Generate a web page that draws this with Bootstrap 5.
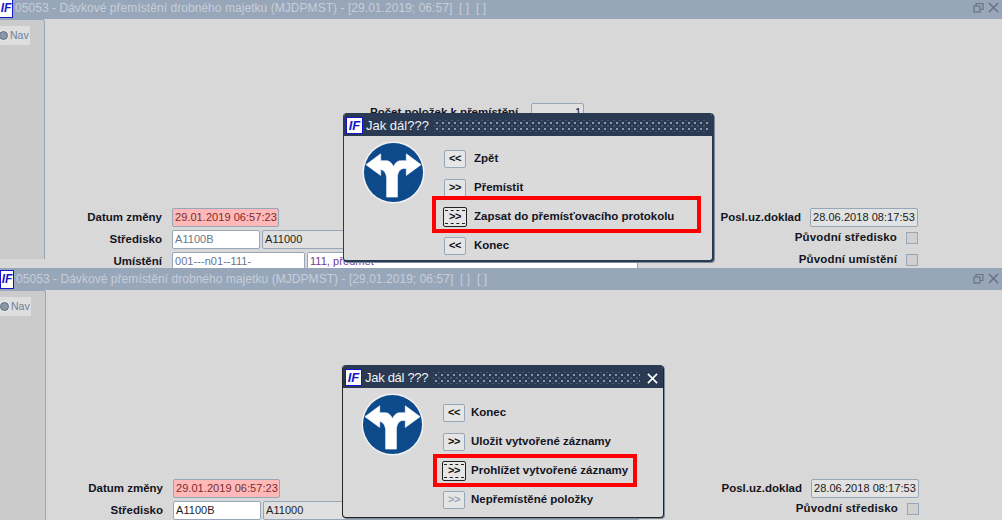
<!DOCTYPE html>
<html lang="cs">
<head>
  <meta charset="UTF-8" />
  <title>Dávkové přemístění drobného majetku</title>
  <link href="https://cdn.jsdelivr.net/npm/bootstrap@5.3.0/dist/css/bootstrap.min.css" rel="stylesheet"/>
  <style>
    body { margin: 0; background: #d8d8d8; overflow: hidden; font-family: "Liberation Sans", Arial, sans-serif; font-size: 12px; color: #111; }
    .pane { position: relative; height: 252px; overflow: hidden; }
    .pane-one { height: 268px; margin-top: 0; }
    .pane-one .pane-inner { margin: -3px 0 0 -1px; }
    .pane-one .right-part { margin-right: 84px; }
    .title-bar { height: 22px; background: #98a6b9; color: #c6cedb; font-size: 12px; letter-spacing: .05px; }
    .title-text { white-space: pre; }
    .logo { flex: none; width: 14px; height: 19px; margin-right: 2px; background: #fff; border: 1px solid #1414c8; color: #1414c8; font: italic bold 12px/17px "Liberation Sans", sans-serif; letter-spacing: 0; text-align: center; overflow: hidden; }
    .win-icons { margin-left: auto; margin-right: 2px; color: #667488; }
    .side-panel { flex: none; width: 46px; height: 240px; background: #cbcbcb; border-right: 1px solid #98a6b9; border-top: 1px solid #98a6b9; border-top-right-radius: 3px; padding-top: 6px; }
    .nav-tab { width: 31px; height: 19px; background: #dedede; color: #6d7f99; font-size: 10.5px; gap: 2px; padding-left: 1px; }
    .nav-dot { width: 9px; height: 9px; border-radius: 50%; background: #8a97a8; border: 1px solid #5f6d80; box-shadow: 0 0 0 1px #e8e8e8; margin-left: -1px; }
    .canvas { flex: 1; padding-top: 84px; }
    .count-row { margin-left: 325px; height: 19px; }
    .count-row .fld { width: 53px; margin-left: 13px; background: #e0e0e0; text-align: right; }
    .form-part { margin-top: 86px; }
    .left-part { width: 594px; }
    .right-part { margin-left: auto; margin-right: 83px; }
    .frow { height: 19px; margin-bottom: 3px; }
    .lbl { font-weight: 700; font-size: 11.5px; color: #14141e; white-space: nowrap; }
    .left-part .lbl { width: 117px; margin-right: 10px; text-align: right; }
    .right-part .lbl { margin-right: 9px; }
    .fld { height: 19px; line-height: 17px; padding: 0 2px; border: 1px solid #98a6b9; border-radius: 2px; font-size: 11px; letter-spacing: .05px; white-space: nowrap; overflow: hidden; }
    .fld-red { width: 107px; background: #ffb9b9; color: #7a2c2c; }
    .fld-date { width: 108px; background: #e2e2e2; color: #1a1a1a; }
    .fld-white { background: #fff; color: #68768a; }
    .fld-grey { background: #e0e0e0; color: #1d1d1d; }
    .fld-code { width: 88px; margin-right: 2px; }
    .fld-long { width: 133px; margin-right: 2px; }
    .fld-name { width: 331px; color: #6d3c96; }
    .fld-dark { color: #1d1d1d; }
    .tick { width: 12px; height: 12px; margin: -3px 0 0 9px; border: 1px solid #98a6b9; background: #d0d0d0; }
    .right-part .me-0 { margin-top: -3px; letter-spacing: .15px; }
    .ask-box { position: absolute; background: #dadada; border: 1px solid #2a3a52; border-width: 0 2px 2px 1px; border-radius: 4px; box-shadow: 1px 1px 0 #7d8a9c; overflow: hidden; }
    .ask-one { left: 343px; top: 113px; width: 371px; height: 149px; }
    .ask-two { left: 342px; top: 97px; width: 322px; height: 153px; border-color: #222; border-width: 0 1px 1px 1px; }
    .ask-head { height: 23px; background: #2a3a52; color: #f0f2f5; font-size: 13px; padding: 2px 0 0 2px; white-space: nowrap; }
    .ask-two .ask-head { letter-spacing: -.3px; }
    .ask-head .logo { width: 17px; height: 17px; font-size: 13px; line-height: 15px; margin-right: 3px; }
    .dots { flex: 1; height: 12px; margin: 0 3px 0 5px; background-image: radial-gradient(circle, #8b96a6 0.9px, transparent 1.2px), radial-gradient(circle, #4a586d 0.9px, transparent 1.2px); background-size: 6px 6px; background-position: 0 0, 3px 3px; }
    .ask-two .dots { margin-right: 7px; }
    .ask-close { width: 16px; color: #fff; }
    .ask-body { padding: 5px 0 0 18px; }
    .sign-pic { flex: none; width: 63px; height: 63px; }
    .step-list { margin-left: 19px; padding-top: 3px; }
    .ask-two .step-list { margin-top: 2px; margin-left: 19px; }
    .step-row { height: 29px; }
    .step-btn { position: relative; width: 22px; height: 18px; padding: 0; border: 1px solid #98a6b9; border-radius: 2px; background: #e6e6e6; color: #111; font-size: 11px; font-weight: 700; line-height: 13px; letter-spacing: -.5px; }
    .step-btn.is-focus { width: 24px; height: 20px; margin: 0 -1px; border-color: #222; }
    .step-btn.is-focus::after { content: ""; position: absolute; inset: 2px 1px; border-top: 1px dashed #222; border-bottom: 1px dashed #222; }
    .step-btn.is-off { color: #98a6b9; }
    .step-text { margin-left: 8px; font-weight: 700; font-size: 11.5px; color: #14141e; white-space: nowrap; }
    .ask-two .step-text { margin-left: 6px; }
    .red-mark { position: absolute; border: 4px solid #f00; }
    .ask-one .red-mark { left: 88px; top: 83px; width: 269px; height: 37px; }
    .ask-two .red-mark { left: 90px; top: 89px; width: 204px; height: 33px; }
  </style>
</head>
<body>

  <div class="pane pane-one">
    <div class="pane-inner">
      <div class="title-bar d-flex align-items-center">
        <div class="logo">IF</div><span class="title-text">05053 - Dávkové přemístění drobného majetku (MJDPMST) - [29.01.2019; 06:57]  [ ]  [ ]</span>
        <svg class="win-icons" width="27" height="12" viewBox="0 0 27 12" fill="none" stroke="currentColor" stroke-width="1.2"><rect x="1" y="4" width="6" height="6"/><path d="M3 4V1.5h7v6H7"/><path d="M16 1l9 9M25 1l-9 9" stroke-width="1.6"/></svg>
      </div>
      <div class="d-flex">
        <div class="side-panel">
          <div class="nav-tab d-flex align-items-center"><span class="nav-dot"></span>Nav</div>
        </div>
        <div class="canvas">
          <div class="count-row d-flex align-items-center">
            <span class="lbl">Počet položek k přemístění</span>
            <div class="fld">1</div>
          </div>
          <div class="form-part d-flex">
            <div class="left-part">
              <div class="frow d-flex align-items-center"><span class="lbl">Datum změny</span><div class="fld fld-red">29.01.2019 06:57:23</div></div>
              <div class="frow d-flex align-items-center"><span class="lbl">Středisko</span><div class="fld fld-white fld-code">A1100B</div><div class="fld fld-grey flex-fill">A11000</div></div>
              <div class="frow d-flex align-items-center"><span class="lbl">Umístění</span><div class="fld fld-white fld-long">001---n01--111-</div><div class="fld fld-white fld-name">111, předmět</div></div>
            </div>
            <div class="right-part">
              <div class="frow d-flex align-items-center justify-content-end"><span class="lbl">Posl.uz.doklad</span><div class="fld fld-date">28.06.2018 08:17:53</div></div>
              <div class="frow d-flex align-items-center justify-content-end"><span class="lbl me-0">Původní středisko</span><div class="tick"></div></div>
              <div class="frow d-flex align-items-center justify-content-end"><span class="lbl me-0">Původní umístění</span><div class="tick"></div></div>
            </div>
          </div>
        </div>
      </div>
    </div>
    <div class="ask-box ask-one">
      <div class="ask-head d-flex align-items-center"><div class="logo">IF</div>Jak dál???<div class="dots"></div></div>
      <div class="ask-body d-flex">
        <svg class="sign-pic" viewBox="0 0 64 64"><use href="#sign"/></svg>
        <div class="step-list">
          <div class="step-row d-flex align-items-center"><button class="btn step-btn">&lt;&lt;</button><span class="step-text">Zpět</span></div>
          <div class="step-row d-flex align-items-center"><button class="btn step-btn">&gt;&gt;</button><span class="step-text">Přemístit</span></div>
          <div class="step-row d-flex align-items-center"><button class="btn step-btn is-focus">&gt;&gt;</button><span class="step-text">Zapsat do přemísťovacího protokolu</span></div>
          <div class="step-row d-flex align-items-center"><button class="btn step-btn">&lt;&lt;</button><span class="step-text">Konec</span></div>
        </div>
      </div>
      <div class="red-mark"></div>
    </div>
  </div>

  <div class="pane">
    <div class="pane-inner">
      <div class="title-bar d-flex align-items-center">
        <div class="logo">IF</div><span class="title-text">05053 - Dávkové přemístění drobného majetku (MJDPMST) - [29.01.2019; 06:57]  [ ]  [ ]</span>
        <svg class="win-icons" width="27" height="12" viewBox="0 0 27 12" fill="none" stroke="currentColor" stroke-width="1.2"><rect x="1" y="4" width="6" height="6"/><path d="M3 4V1.5h7v6H7"/><path d="M16 1l9 9M25 1l-9 9" stroke-width="1.6"/></svg>
      </div>
      <div class="d-flex">
        <div class="side-panel">
          <div class="nav-tab d-flex align-items-center"><span class="nav-dot"></span>Nav</div>
        </div>
        <div class="canvas">
          <div class="count-row"></div>
          <div class="form-part d-flex">
            <div class="left-part">
              <div class="frow d-flex align-items-center"><span class="lbl">Datum změny</span><div class="fld fld-red">29.01.2019 06:57:23</div></div>
              <div class="frow d-flex align-items-center"><span class="lbl">Středisko</span><div class="fld fld-white fld-dark fld-code">A1100B</div><div class="fld fld-grey flex-fill">A11000</div></div>
            </div>
            <div class="right-part">
              <div class="frow d-flex align-items-center justify-content-end"><span class="lbl">Posl.uz.doklad</span><div class="fld fld-date">28.06.2018 08:17:53</div></div>
              <div class="frow d-flex align-items-center justify-content-end"><span class="lbl me-0">Původní středisko</span><div class="tick"></div></div>
            </div>
          </div>
        </div>
      </div>
    </div>
    <div class="ask-box ask-two">
      <div class="ask-head d-flex align-items-center"><div class="logo">IF</div>Jak dál ???<div class="dots"></div><div class="ask-close"><svg width="11" height="11" viewBox="0 0 12 12" stroke="currentColor" stroke-width="1.8"><path d="M1 1l10 10M11 1L1 11"/></svg></div></div>
      <div class="ask-body d-flex">
        <svg class="sign-pic" viewBox="0 0 64 64"><use href="#sign"/></svg>
        <div class="step-list">
          <div class="step-row d-flex align-items-center"><button class="btn step-btn">&lt;&lt;</button><span class="step-text">Konec</span></div>
          <div class="step-row d-flex align-items-center"><button class="btn step-btn">&gt;&gt;</button><span class="step-text">Uložit vytvořené záznamy</span></div>
          <div class="step-row d-flex align-items-center"><button class="btn step-btn is-focus">&gt;&gt;</button><span class="step-text">Prohlížet vytvořené záznamy</span></div>
          <div class="step-row d-flex align-items-center"><button class="btn step-btn is-off">&gt;&gt;</button><span class="step-text">Nepřemístěné položky</span></div>
        </div>
      </div>
      <div class="red-mark"></div>
    </div>
  </div>

  <!-- dopravni znacka, pouzita v obou dialozich -->
  <svg width="0" height="0" class="position-absolute">
    <defs>
      <g id="sign">
        <circle cx="32" cy="32" r="31.5" fill="#f2f2f2"/>
        <circle cx="32" cy="32" r="30" fill="#0d4a8c"/>
        <path d="M4 24 19 13v7h5c4 0 6 2 8 6 2-4 4-6 8-6h5v-7l15 11-15 11v-7h-3c-3 0-6 4-6 9v20H25V38c0-5-3-9-6-9v6z" fill="#fff" stroke="#fff" stroke-width=".6" stroke-linejoin="round"/>
      </g>
    </defs>
  </svg>

</body>
</html>
